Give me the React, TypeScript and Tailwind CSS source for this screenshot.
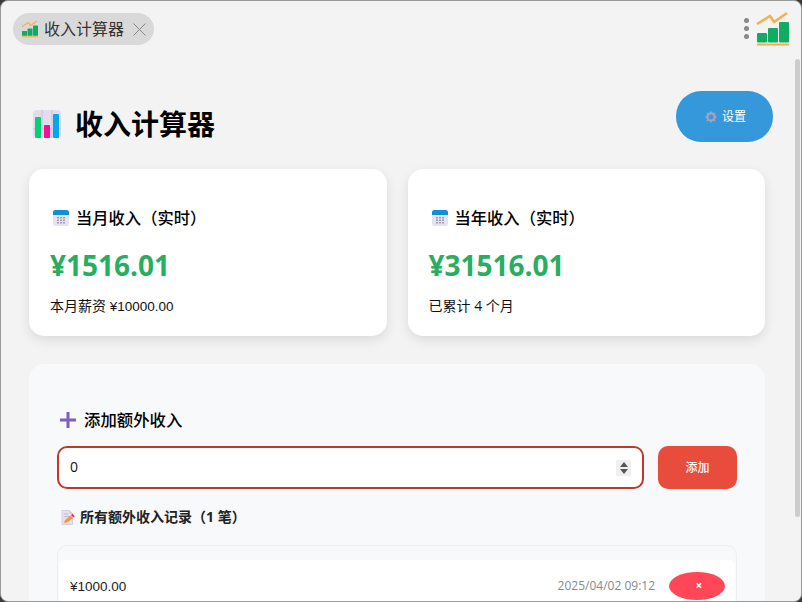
const FONT = "font-['Open_Sans','Noto_Sans_CJK_SC',sans-serif]";
const NUM = "font-['Liberation_Sans','Noto_Sans_CJK_SC',sans-serif] text-[13.5px]";

// App logo: rising bars with an orange trend line
function LogoIcon({ className }: { className?: string }) {
  return (
    <svg viewBox="0 0 34 36" className={className}>
      <path d="M2 13 L15 5 L19 11 L32 2" fill="none" stroke="#f9ad4f" strokeWidth="2.500" />
      <rect x="2" y="22" width="10" height="9.500" rx="1" fill="#12ab62" />
      <rect x="13" y="17" width="10" height="14.500" rx="1" fill="#12ab62" />
      <rect x="24" y="11" width="10" height="20.500" rx="1" fill="#12ab62" />
      <rect x="2" y="32.500" width="32" height="2" fill="#f9ad4f" />
    </svg>
  );
}

function ChartIcon() {
  return (
    <svg viewBox="0 0 28 28" className="h-7 w-7 shrink-0">
      <rect width="28" height="28" rx="4" fill="#e3dcec" />
      <path d="M9 0V28M19 0V28M0 19H28" stroke="#c9c2d4" strokeWidth="1" />
      <rect x="2" y="7" width="6" height="21" rx="1" fill="#00d278" />
      <rect x="11" y="15" width="6" height="13" rx="1" fill="#f80e95" />
      <rect x="20" y="4" width="6" height="24" rx="1" fill="#00a8f3" />
    </svg>
  );
}

function CalendarIcon() {
  return (
    <svg viewBox="0 0 16 16" className="h-4 w-4 shrink-0">
      <rect width="16" height="16" rx="2.500" fill="#e7e3ee" />
      <path d="M0 5V2.500A2.500 2.500 0 0 1 2.500 0h11A2.500 2.500 0 0 1 16 2.500V5z" fill="#0f8fd8" />
      <path
        d="M4 7h2v1.500H4zM7 7h2v1.500H7zM10 7h2v1.500h-2zM4 9.500h2V11H4zM7 9.500h2V11H7zM10 9.500h2V11h-2zM4 12h2v1.500H4zM7 12h2v1.500H7zM10 12h2v1.500h-2z"
        fill="#a19cb6"
      />
    </svg>
  );
}

function MemoIcon() {
  return (
    <svg viewBox="0 0 14 15" className="h-[15px] w-[14px] shrink-0">
      <path d="M1 0.500H8.500L11.500 3.500V14.500H1Z" fill="#e6e0ee" stroke="#c9c2d4" strokeWidth="0.700" />
      <path d="M8.500 0.500V3.500H11.500" fill="#cfc8da" />
      <path d="M3 4H7M3 6.500H9" stroke="#b8b0c8" strokeWidth="0.800" />
      <path d="M3 13L4 10L9.500 5.500L12 8L6.500 12.300Z" fill="#f59a2f" />
      <path d="M10 5L11.500 3.800L13.800 6.200L12.500 7.500Z" fill="#f3207f" />
    </svg>
  );
}

function GearIcon() {
  return (
    <svg viewBox="0 0 12 12" className="h-3 w-3 shrink-0">
      <circle cx="6" cy="6" r="3.600" fill="none" stroke="#a8a3bd" strokeWidth="2.200" />
      <path
        d="M6 0.400V2.400M6 9.600V11.600M0.400 6H2.400M9.600 6H11.600M2 2L3.400 3.400M8.600 8.600L10 10M10 2L8.600 3.400M3.400 8.600L2 10"
        stroke="#a8a3bd"
        strokeWidth="1.500"
      />
      <circle cx="6" cy="6" r="1.400" fill="#5b8fc9" />
    </svg>
  );
}

function StatCard({ title, amount, note }: { title: string; amount: string; note: React.ReactNode }) {
  return (
    <div className="flex h-[167px] flex-1 flex-col rounded-[15px] bg-white pl-[21px] pt-[39px] shadow-[0_4px_12px_rgba(0,0,0,0.1)]">
      <div className="flex h-[20px] items-center gap-[7px] pl-[3px] font-medium leading-[20px] text-black">
        <CalendarIcon />
        <span className="text-[16.3px]">{title}</span>
      </div>
      <div className="mt-[17px] h-[40px] text-[28px] font-bold leading-[40px] text-[#27ae60]">{amount}</div>
      <div className="mt-[11px] text-[14px] leading-[20px] text-[#111]">{note}</div>
    </div>
  );
}

export default function App() {
  return (
    <div className={`relative h-[602px] w-[802px] overflow-hidden bg-[#3a3a3a] ${FONT}`}>
      <div className="h-full w-full overflow-hidden rounded-[8px] border border-[#9a9a9a] bg-[#f3f3f3]">
        {/* top bar */}
        <div className="flex h-[58px] items-start justify-between pl-3 pr-3">
          <div className="mt-3 flex h-8 w-[141px] items-center rounded-full bg-[#d9d9d9] pl-2">
            <LogoIcon className="h-[18px] w-[17px]" />
            <span className="ml-[6px] text-[16px] leading-none text-[#333]">收入计算器</span>
            <svg viewBox="0 0 13 13" className="ml-[9px] h-[13px] w-[13px]">
              <path d="M0.500 0.500L12.500 12.500M12.500 0.500L0.500 12.500" stroke="#888" strokeWidth="1" />
            </svg>
          </div>
          <div className="mt-[10px] flex items-start">
            <div className="mt-[7px] flex flex-col gap-[3px]">
              <span className="h-[5px] w-[5px] rounded-full bg-[#888]" />
              <span className="h-[5px] w-[5px] rounded-full bg-[#888]" />
              <span className="h-[5px] w-[5px] rounded-full bg-[#888]" />
            </div>
            <LogoIcon className="ml-[6px] h-9 w-[34px]" />
          </div>
        </div>

        {/* content */}
        <div className="pl-7 pr-9">
          <div className="-mr-2 flex items-start justify-between pt-[32px]">
            <div className="mt-[18px] flex items-center gap-[14px] pl-[4px]">
              <ChartIcon />
              <h1 className="text-[28px] font-bold leading-[30px] text-black">收入计算器</h1>
            </div>
            <button className="flex h-[51px] w-[97px] items-center justify-center gap-[5px] rounded-[25px] bg-[#3498db] pl-[2px] text-[12px] text-white">
              <GearIcon />
              设置
            </button>
          </div>

          <div className="mt-[27px] flex gap-[21px]">
            <StatCard
              title="当月收入（实时）"
              amount="¥1516.01"
              note={
                <>
                  本月薪资 <span className={NUM}>¥10000.00</span>
                </>
              }
            />
            <StatCard title="当年收入（实时）" amount="¥31516.01" note="已累计 4 个月" />
          </div>

          <div className="mt-[28px] h-[300px] rounded-[15px] bg-[#f8f9fa] pl-7 pr-7 pt-[46px]">
            <div className="flex h-5 items-center gap-2 pl-[3px] text-[16.4px] font-medium leading-5 text-black">
              <svg viewBox="0 0 16 16" className="h-4 w-4 shrink-0">
                <path d="M6.500 0H9.500V6.500H16V9.500H9.500V16H6.500V9.500H0V6.500H6.500Z" fill="#7d5fc4" />
              </svg>
              添加额外收入
            </div>

            <div className="mt-[16px] flex gap-[14px]">
              <div className="flex h-[43px] flex-1 items-center justify-between rounded-[10px] border-2 border-[#c0392b] bg-white pl-[11px] pr-[11px]">
                <span className="-mt-[2px] text-[14px] text-[#111]">0</span>
                <span className="flex h-[16px] w-[15px] flex-col items-center justify-center gap-[2px] bg-[#f0f0f0]">
                  <span className="h-0 w-0 border-x-[4px] border-b-[5px] border-x-transparent border-b-[#555]" />
                  <span className="h-0 w-0 border-x-[4px] border-t-[5px] border-x-transparent border-t-[#555]" />
                </span>
              </div>
              <button className="h-[43px] w-[79px] rounded-[10px] bg-[#e74c3c] text-[12px] font-medium text-white">添加</button>
            </div>

            <div className="mt-[18px] flex h-[20px] items-center gap-[5px] pl-[4px] text-[14px] font-bold leading-5 text-[#222]">
              <MemoIcon />
              所有额外收入记录（1 笔）
            </div>

            <div className="mt-[18px] rounded-t-[10px] border border-[#eeeeee] pl-[1px] pr-[1px] pt-[14px]">
              <div className="flex h-[52px] items-start justify-between rounded-t-[6px] bg-white pl-[11px] pr-[10px] pt-[12px]">
                <span className={`mt-[8px] leading-none text-[#222] ${NUM}`}>¥1000.00</span>
                <div className="flex items-center gap-[14px]">
                  <span className="text-[12px] leading-none text-[#7f8c8d]">2025/04/02 09:12</span>
                  <button className="flex h-[28px] w-[56px] items-center justify-center rounded-[50%] bg-[#ff4757] pl-1 text-[12px] font-bold leading-none text-white">
                    ×
                  </button>
                </div>
              </div>
            </div>
          </div>
        </div>
      </div>

      {/* scrollbar thumb overlays the content edge */}
      <div className="absolute left-[795px] top-[59px] h-[458px] w-[5px] rounded-full bg-[#cdcdcd]" />
    </div>
  );
}
